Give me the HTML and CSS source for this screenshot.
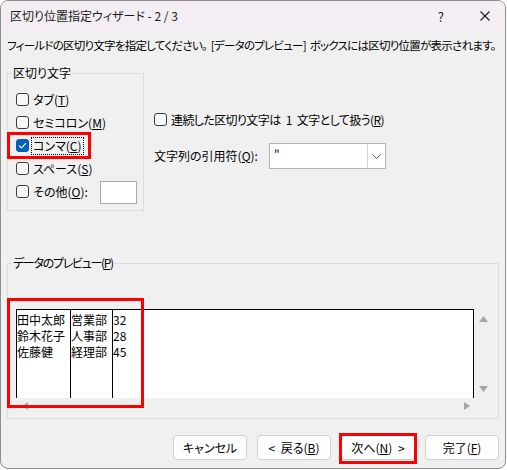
FILE: index.html
```html
<!DOCTYPE html>
<html lang="ja">
<head>
<meta charset="utf-8">
<title>区切り位置指定ウィザード</title>
<link rel="stylesheet" href="styles.css">
</head>
<body>
<div class="window">
  <div class="titlebar">
    <span class="title">区切り位置指定ウィザード - 2 / 3</span>
    <span class="help">?</span>
    <svg class="close" width="10" height="10" viewBox="0 0 10 10"><path d="M0.5 0.5L9.5 9.5M9.5 0.5L0.5 9.5" stroke="#1a1a1a" stroke-width="1.1" fill="none"/></svg>
  </div>
  <div class="content">
    <p class="instruction">フィールドの区切り文字を指定してください。 [データのプレビュー] ボックスには区切り位置が表示されます。</p>
    <div class="top-row">
      <fieldset class="group delims">
        <legend>区切り文字</legend>
        <div class="check-row"><span class="box"></span><span class="lbl">タブ(<u>T</u>)</span></div>
        <div class="check-row"><span class="box"></span><span class="lbl">セミコロン(<u>M</u>)</span></div>
        <div class="check-row"><span class="box checked"><svg width="9" height="7" viewBox="0 0 9 7"><path d="M1 3.6L3.4 6L8 1.2" stroke="#fff" stroke-width="1.1" fill="none"/></svg></span><span class="lbl focus">コンマ(<u>C</u>)</span></div>
        <div class="check-row"><span class="box"></span><span class="lbl">スペース(<u>S</u>)</span></div>
        <div class="check-row"><span class="box"></span><span class="lbl">その他(<u>O</u>):</span><span class="other-input"></span></div>
      </fieldset>
      <div class="options">
        <div class="check-row"><span class="box"></span><span class="lbl tight">連続した区切り文字は 1 文字として扱う(<u>R</u>)</span></div>
        <div class="quote-row">
          <span class="quote-label">文字列の引用符(<u>Q</u>):</span>
          <div class="combo">
            <span class="combo-value">"</span>
            <span class="combo-btn"><svg width="9" height="5" viewBox="0 0 9 5"><path d="M0.5 0.5L4.5 4.5L8.5 0.5" stroke="#555" stroke-width="1" fill="none"/></svg></span>
          </div>
        </div>
      </div>
    </div>
    <fieldset class="group preview">
      <legend class="preview-legend">データのプレビュー(<u>P</u>)</legend>
      <div class="preview-grid">
        <div class="preview-box">
          <div class="col c1"><div>田中太郎</div><div>鈴木花子</div><div>佐藤健</div></div>
          <div class="col c2"><div>営業部</div><div>人事部</div><div>経理部</div></div>
          <div class="col c3"><div>32</div><div>28</div><div>45</div></div>
        </div>
        <div class="vscroll">
          <svg width="9" height="6" viewBox="0 0 9 6"><path d="M4.5 0L9 6H0Z" fill="#a6a6a6"/></svg>
          <svg width="9" height="6" viewBox="0 0 9 6"><path d="M0 0H9L4.5 6Z" fill="#a6a6a6"/></svg>
        </div>
        <div class="hscroll">
          <svg width="6" height="8" viewBox="0 0 6 8"><path d="M6 0V8L0 4Z" fill="#a6a6a6"/></svg>
          <svg width="6" height="8" viewBox="0 0 6 8"><path d="M0 0L6 4L0 8Z" fill="#a6a6a6"/></svg>
        </div>
      </div>
    </fieldset>
  </div>
  <div class="buttons">
    <button class="btn">キャンセル</button>
    <button class="btn">&lt; 戻る(<u>B</u>)</button>
    <button class="btn">次へ(<u>N</u>) &gt;</button>
    <button class="btn">完了(<u>F</u>)</button>
  </div>
  <div class="mark mark-comma"></div>
  <div class="mark mark-preview"></div>
  <div class="mark mark-next"></div>
</div>
</body>
</html>
```
FILE: styles.css
```css
* { box-sizing: border-box; }
html, body { margin: 0; padding: 0; }
body {
  background: #ffffff;
  font-family: "Noto Sans CJK JP", "Noto Sans", sans-serif;
  font-size: 12px;
  line-height: 16px;
  color: #000;
  font-feature-settings: "palt";
}
.window {
  position: relative;
  width: 506px;
  height: 469px;
  border: 1px solid #8e8e8e;
  border-radius: 8px;
  background: #f0f0f0;
  overflow: hidden;
}
.titlebar {
  height: 31px;
  background: #f4eef4;
  display: flex;
  align-items: center;
  padding-left: 9px;
}
.title { flex: 1; color: #1a1a1a; margin-top: -1px; }
.help { font-size: 13px; margin-right: 36px; color: #1a1a1a; }
.close { margin-right: 15px; margin-top: -1px; }
.content { padding: 5px 0 0 6px; }
.instruction {
  margin: 0;
  white-space: nowrap;
  font-size: 11.5px;
  letter-spacing: -0.75px;
  word-spacing: 2px;
}
.top-row { display: flex; align-items: flex-start; margin-top: 12px; }
.group {
  margin: 0;
  border: 1px solid #dcdcdc;
  min-inline-size: 0;
}
.group legend {
  padding: 0 1px;
  margin-left: -4px;
  line-height: 16px;
}
.group .preview-legend { letter-spacing: -1.3px; }
.delims {
  width: 137px;
  padding: 7px 0 7px 8px;
}
.check-row {
  height: 23px;
  display: flex;
  align-items: center;
}
.box {
  width: 13px;
  height: 13px;
  border: 1px solid #3c3c3c;
  border-radius: 3px;
  background: #f7f7f7;
  display: flex;
  align-items: center;
  justify-content: center;
  flex: none;
}
.box.checked { background: #005fb8; border-color: #005fb8; }
.lbl {
  margin-left: 2px;
  padding: 0 1px;
  border: 1px dotted transparent;
  white-space: nowrap;
}
.lbl.tight { letter-spacing: -0.6px; word-spacing: 3px; }
.lbl.focus { border-color: #000; }
.other-input {
  margin-left: auto;
  margin-right: 6px;
  width: 37px;
  height: 23px;
  margin-top: 2px;
  background: #fff;
  border: 1px solid #a8a8a8;
}
.options { margin-left: 10px; margin-top: 43px; }
.quote-row { display: flex; align-items: center; margin-top: 12px; }
.quote-label { width: 115px; }
.combo {
  width: 117px;
  height: 26px;
  background: #fff;
  border: 1px solid #b3b3b3;
  display: flex;
}
.combo-value { flex: 1; padding-left: 4px; line-height: 22px; }
.combo-btn {
  width: 18px;
  border-left: 1px solid #d5d5d5;
  display: flex;
  align-items: center;
  justify-content: center;
}
.preview {
  width: 492px;
  margin-top: 44px;
  padding: 38px 5px 4px 8px;
}
.preview-grid {
  display: grid;
  grid-template-columns: 458px 19px;
  grid-template-rows: 89px 16px;
}
.preview-box {
  background: #fff;
  border-top: 1px solid #000;
  border-right: 1px solid #000;
  display: flex;
  font-feature-settings: normal;
  padding-top: 2px;
}
.col { border-left: 1px solid #000; margin-top: -2px; padding-top: 2px; }
.c1 { width: 54px; }
.c2 { width: 42px; }
.c3 { flex: 1; }
.vscroll {
  display: flex;
  flex-direction: column;
  justify-content: space-between;
  align-items: center;
  padding: 7px 0 6px;
}
.hscroll {
  display: flex;
  justify-content: space-between;
  align-items: center;
  padding: 0 4px 0 6px;
}
.buttons {
  display: flex;
  justify-content: flex-end;
  gap: 10px;
  padding-right: 6px;
  margin-top: 16px;
}
.btn {
  width: 74px;
  height: 25px;
  background: #fdfdfd;
  border: 1px solid #d0d0d0;
  border-radius: 4px;
  font: inherit;
  font-feature-settings: "palt";
  word-spacing: 3px;
  color: #000;
  padding: 0;
}
.mark {
  position: absolute;
  border: 3px solid #ff0000;
}
.mark-comma { left: 6px; top: 131px; width: 84px; height: 27px; }
.mark-preview { left: 6px; top: 297px; width: 137px; height: 110px; }
.mark-next { left: 338px; top: 432px; width: 78px; height: 31px; }
```
